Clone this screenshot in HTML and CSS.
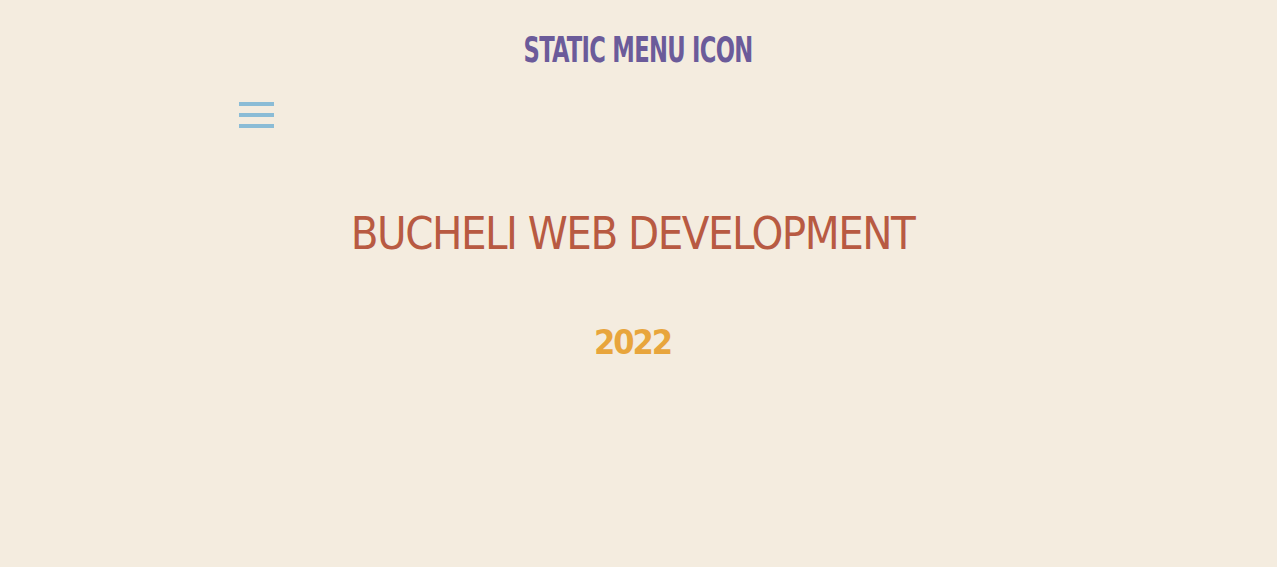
FILE: index.html
```html
<!DOCTYPE html>
<html>
<head>
<meta charset="utf-8">
<link rel="stylesheet" href="styles.css">
</head>
<body>
<header class="top">
  <h1 class="title">STATIC MENU ICON</h1>
</header>
<nav class="nav">
  <button class="menu" aria-label="menu">
    <span class="bar"></span>
    <span class="bar"></span>
    <span class="bar"></span>
  </button>
</nav>
<main class="main">
  <h2 class="brand">BUCHELI WEB DEVELOPMENT</h2>
  <p class="year">2022</p>
</main>
</body>
</html>
```
FILE: styles.css
```css
html, body {
  margin: 0;
  padding: 0;
  background: #f4ecdf;
  height: 100%;
}
body {
  font-family: "DejaVu Sans Condensed", "DejaVu Sans", sans-serif;
}
.top {
  display: flex;
  justify-content: center;
  padding-top: 32px;
}
.title {
  margin: 0;
  font-family: "DejaVu Sans Condensed", "DejaVu Sans", sans-serif;
  font-weight: 700;
  font-size: 35px;
  line-height: 37px;
  color: #6b5b9a;
  letter-spacing: -1px;
  transform: scaleX(0.72);
}
.nav {
  padding: 33px 0 0 239px;
}
.menu {
  display: flex;
  flex-direction: column;
  gap: 7px;
  padding: 0;
  border: 0;
  background: none;
  width: 35px;
}
.bar {
  display: block;
  height: 4px;
  width: 35px;
  background: #8bbcd6;
}
.main {
  display: flex;
  flex-direction: column;
  align-items: center;
  padding-right: 12px;
}
.brand {
  margin: 80px 0 0;
  font-family: "DejaVu Sans Condensed", "DejaVu Sans", sans-serif;
  font-weight: 400;
  font-size: 45px;
  line-height: 52px;
  color: #b85a42;
  letter-spacing: -1.5px;
}
.year {
  margin: 62px 0 0;
  font-family: "DejaVu Sans Condensed", "DejaVu Sans", sans-serif;
  font-weight: 700;
  font-size: 34px;
  line-height: 40px;
  color: #e8a53c;
  letter-spacing: -2px;
}
```
